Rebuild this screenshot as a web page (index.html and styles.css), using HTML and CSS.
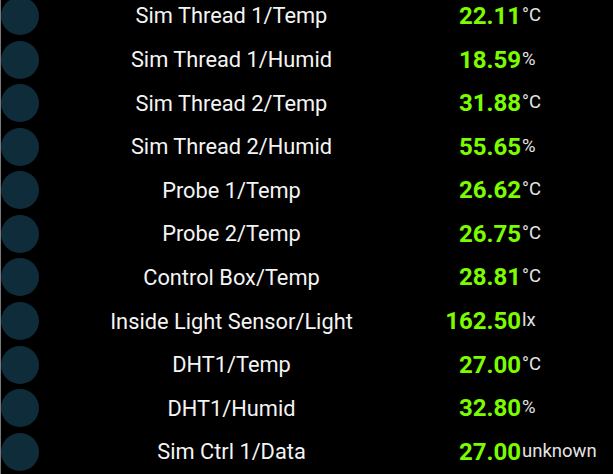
FILE: index.html
```html
<!DOCTYPE html>
<html>
<head>
<meta charset="utf-8">
<link rel="stylesheet" href="styles.css">
</head>
<body>
<div class="panel">
  <div class="list">
    <div class="row"><div class="dot"></div><div class="label">Sim Thread 1/Temp</div><div class="reading"><span class="value">22.11</span><span class="unit">°C</span></div></div>
    <div class="row"><div class="dot"></div><div class="label">Sim Thread 1/Humid</div><div class="reading"><span class="value">18.59</span><span class="unit">%</span></div></div>
    <div class="row"><div class="dot"></div><div class="label">Sim Thread 2/Temp</div><div class="reading"><span class="value">31.88</span><span class="unit">°C</span></div></div>
    <div class="row"><div class="dot"></div><div class="label">Sim Thread 2/Humid</div><div class="reading"><span class="value">55.65</span><span class="unit">%</span></div></div>
    <div class="row"><div class="dot"></div><div class="label">Probe 1/Temp</div><div class="reading"><span class="value">26.62</span><span class="unit">°C</span></div></div>
    <div class="row"><div class="dot"></div><div class="label">Probe 2/Temp</div><div class="reading"><span class="value">26.75</span><span class="unit">°C</span></div></div>
    <div class="row"><div class="dot"></div><div class="label">Control Box/Temp</div><div class="reading"><span class="value">28.81</span><span class="unit">°C</span></div></div>
    <div class="row"><div class="dot"></div><div class="label">Inside Light Sensor/Light</div><div class="reading"><span class="value">162.50</span><span class="unit">lx</span></div></div>
    <div class="row"><div class="dot"></div><div class="label">DHT1/Temp</div><div class="reading"><span class="value">27.00</span><span class="unit">°C</span></div></div>
    <div class="row"><div class="dot"></div><div class="label">DHT1/Humid</div><div class="reading"><span class="value">32.80</span><span class="unit">%</span></div></div>
    <div class="row"><div class="dot"></div><div class="label">Sim Ctrl 1/Data</div><div class="reading"><span class="value">27.00</span><span class="unit">unknown</span></div></div>
  </div>
</div>
</body>
</html>
```
FILE: styles.css
```css
html, body {
  margin: 0;
  padding: 0;
  background: #000;
  overflow: hidden;
}
.panel {
  width: 612px;
  height: 474px;
  border-left: 1px solid #7a7a7a;
  overflow: hidden;
  font-family: Roboto, "Liberation Sans", sans-serif;
}
.list {
  margin-top: -5.9px;
}
.row {
  display: flex;
  align-items: center;
  height: 43.6px;
}
.dot {
  width: 38px;
  height: 38px;
  border-radius: 50%;
  background: #0f2c3b;
  flex: none;
}
.label {
  flex: 1;
  text-align: center;
  color: #f4f4f4;
  font-size: 21.8px;
  white-space: nowrap;
}
.reading {
  width: 189px;
  flex: none;
  white-space: nowrap;
}
.value {
  display: inline-block;
  width: 97px;
  text-align: right;
  color: #7cfc00;
  font-size: 24px;
  font-weight: bold;
}
.unit {
  color: #e4e4e4;
  font-size: 18.5px;
  vertical-align: 3px;
  margin-left: 1px;
}
```
